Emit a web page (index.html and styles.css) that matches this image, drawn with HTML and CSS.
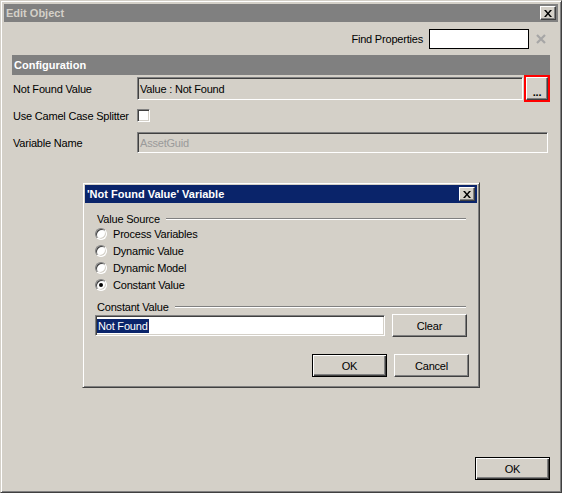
FILE: index.html
```html
<!DOCTYPE html>
<html>
<head>
<meta charset="utf-8">
<title>Edit Object</title>
<link rel="stylesheet" href="styles.css">
</head>
<body>
<div class="window">
  <div class="titlebar inactive">
    <span class="title">Edit Object</span>
    <span class="close-btn"><svg width="8" height="7" viewBox="0 0 8 7"><path d="M0 0h2l2 2.4L6 0h2L5 3.5 8 7H6L4 4.6 2 7H0l3-3.5z" fill="#000"/></svg></span>
  </div>
  <div class="main">
    <div class="find-row">
      <span class="find-label">Find Properties</span>
      <span class="find-input"></span>
      <svg class="clear-x" width="10" height="10" viewBox="0 0 10 10"><path d="M1 1L9 9M9 1L1 9" stroke="#a6a6a6" stroke-width="2.2" fill="none"/></svg>
    </div>
    <div class="section-header">Configuration</div>
    <div class="props">
      <div class="prop-row">
        <span class="prop-label">Not Found Value</span>
        <span class="field readonly">Value : Not Found</span>
        <span class="ellipsis-wrap"><span class="btn ellipsis">...</span></span>
      </div>
      <div class="prop-row">
        <span class="prop-label">Use Camel Case Splitter</span>
        <span class="checkbox"></span>
      </div>
      <div class="prop-row">
        <span class="prop-label">Variable Name</span>
        <span class="field readonly disabled">AssetGuid</span>
      </div>
    </div>
    <div class="footer">
      <span class="btn default main-ok">OK</span>
    </div>
  </div>
</div>

<div class="dialog">
  <div class="titlebar active">
    <span class="title">'Not Found Value' Variable</span>
    <span class="close-btn"><svg width="8" height="7" viewBox="0 0 8 7"><path d="M0 0h2l2 2.4L6 0h2L5 3.5 8 7H6L4 4.6 2 7H0l3-3.5z" fill="#000"/></svg></span>
  </div>
  <div class="group-head">
    <span>Value Source</span>
    <span class="rule"></span>
  </div>
  <div class="radio-list">
    <div class="radio-row"><span class="radio"></span><span>Process Variables</span></div>
    <div class="radio-row"><span class="radio"></span><span>Dynamic Value</span></div>
    <div class="radio-row"><span class="radio"></span><span>Dynamic Model</span></div>
    <div class="radio-row"><span class="radio checked"></span><span>Constant Value</span></div>
  </div>
  <div class="group-head const-head">
    <span>Constant Value</span>
    <span class="rule"></span>
  </div>
  <div class="input-row">
    <span class="text-input"><span class="sel">Not Found</span></span>
    <span class="btn clear-btn">Clear</span>
  </div>
  <div class="btn-row">
    <span class="btn default dlg-btn">OK</span>
    <span class="btn dlg-btn">Cancel</span>
  </div>
</div>
</body>
</html>
```

FILE: styles.css
```css
html, body {
  margin: 0;
  padding: 0;
}

body {
  width: 562px;
  height: 493px;
  background: #d4d0c8;
  font-family: "Liberation Sans", Arial, sans-serif;
  font-size: 11px;
  letter-spacing: -0.2px;
  color: #000;
  position: relative;
  overflow: hidden;
}

.window {
  box-sizing: border-box;
  width: 562px;
  height: 493px;
  border: 1px solid;
  border-color: #d4d0c8 #404040 #404040 #d4d0c8;
  box-shadow: inset 1px 1px #fff, inset -1px -1px #808080;
  padding: 3px;
  display: flex;
  flex-direction: column;
}

.titlebar {
  flex: none;
  height: 18px;
  display: flex;
  align-items: center;
  justify-content: space-between;
  padding: 0 2px 0 2px;
  font-weight: bold;
  letter-spacing: 0;
}

.titlebar.inactive {
  background: #808080;
  color: #d4d0c8;
}

.titlebar.active {
  background: #0a246a;
  color: #fff;
}

.close-btn {
  box-sizing: border-box;
  width: 16px;
  height: 14px;
  background: #d4d0c8;
  border: 1px solid;
  border-color: #fff #404040 #404040 #fff;
  box-shadow: inset -1px -1px #808080;
  display: flex;
  align-items: center;
  justify-content: center;
}

.close-btn svg {
  display: block;
}

.main {
  flex: 1;
  display: flex;
  flex-direction: column;
}

.find-row {
  margin-top: 7px;
  height: 20px;
  display: flex;
  align-items: center;
  justify-content: flex-end;
  padding-right: 12px;
}

.find-input {
  box-sizing: border-box;
  width: 100px;
  height: 20px;
  margin-left: 6px;
  background: #fff;
  border: 1px solid #000;
}

.clear-x {
  margin-left: 7px;
  display: block;
}

.section-header {
  margin: 6px 8px 0 8px;
  height: 20px;
  line-height: 20px;
  background: #808080;
  color: #fff;
  font-weight: bold;
  letter-spacing: 0;
  padding-left: 2px;
}

.props {
  padding: 0 8px 0 9px;
}

.prop-row {
  display: flex;
  align-items: center;
  height: 27px;
}

.prop-label {
  flex: none;
  width: 124px;
  white-space: nowrap;
}

.field {
  box-sizing: border-box;
  flex: 1;
  height: 23px;
  display: flex;
  align-items: center;
  padding-left: 2px;
  white-space: nowrap;
  border: 1px solid;
  border-color: #808080 #fff #fff #808080;
  box-shadow: inset 1px 1px #404040, inset -1px -1px #d4d0c8;
}

.field.readonly {
  background: #d4d0c8;
}

.field.disabled {
  height: 21px;
  margin-right: 2px;
  color: #9a9a9a;
}

.ellipsis-wrap {
  box-sizing: border-box;
  flex: none;
  width: 26px;
  height: 27px;
  margin-left: 1px;
  border: 2px solid #f00;
  display: flex;
}

.btn {
  box-sizing: border-box;
  background: #d4d0c8;
  border: 1px solid;
  border-color: #fff #404040 #404040 #fff;
  box-shadow: inset -1px -1px #808080;
  display: flex;
  align-items: center;
  justify-content: center;
}

.btn.default {
  border-color: #000;
  box-shadow: inset 1px 1px #fff, inset -1px -1px #404040, inset -2px -2px #808080;
}

.ellipsis {
  flex: 1;
  align-items: flex-end;
  padding-bottom: 3px;
  font-weight: bold;
  line-height: 8px;
}

.checkbox {
  box-sizing: border-box;
  width: 13px;
  height: 13px;
  background: #fff;
  border: 1px solid;
  border-color: #808080 #fff #fff #808080;
  box-shadow: inset 1px 1px #404040, inset -1px -1px #d4d0c8;
}

.footer {
  margin-top: auto;
  display: flex;
  justify-content: flex-end;
  padding: 0 8px 9px 0;
}

.main-ok {
  width: 75px;
  height: 23px;
}

.dialog {
  position: absolute;
  left: 82px;
  top: 182px;
  box-sizing: border-box;
  width: 398px;
  height: 206px;
  background: #d4d0c8;
  border: 1px solid;
  border-color: #d4d0c8 #404040 #404040 #d4d0c8;
  box-shadow: inset 1px 1px #fff, inset -1px -1px #808080;
  padding: 2px;
  display: flex;
  flex-direction: column;
}

.group-head {
  margin-top: 9px;
  height: 13px;
  display: flex;
  align-items: center;
  padding: 0 11px 0 12px;
}

.group-head .rule {
  flex: 1;
  height: 0;
  margin-left: 6px;
  border-top: 1px solid #808080;
  border-bottom: 1px solid #fff;
}

.radio-list {
  padding-left: 10px;
}

.radio-row {
  height: 17px;
  display: flex;
  align-items: center;
}

.radio {
  box-sizing: border-box;
  width: 12px;
  height: 12px;
  margin-right: 6px;
  border-radius: 50%;
  background: #fff;
  border: 1px solid;
  border-color: #808080 #fff #fff #808080;
  box-shadow: inset 1px 1px #404040, inset -1px -1px #d4d0c8;
  display: flex;
  align-items: center;
  justify-content: center;
}

.radio.checked::after {
  content: "";
  width: 4px;
  height: 4px;
  border-radius: 50%;
  background: #000;
}

.const-head {
  margin-top: 7px;
}

.input-row {
  margin-top: 1px;
  height: 23px;
  display: flex;
  align-items: center;
  padding-left: 10px;
}

.text-input {
  box-sizing: border-box;
  width: 290px;
  height: 21px;
  background: #fff;
  padding-left: 1px;
  display: flex;
  align-items: center;
  border: 1px solid;
  border-color: #808080 #fff #fff #808080;
  box-shadow: inset 1px 1px #404040, inset -1px -1px #d4d0c8;
}

.sel {
  background: #0a246a;
  color: #fff;
  padding: 1px;
}

.clear-btn {
  width: 75px;
  height: 23px;
  margin-left: 7px;
}

.btn-row {
  margin-top: 17px;
  display: flex;
  justify-content: flex-end;
  gap: 7px;
  padding-right: 8px;
}

.dlg-btn {
  width: 75px;
  height: 23px;
}
```
